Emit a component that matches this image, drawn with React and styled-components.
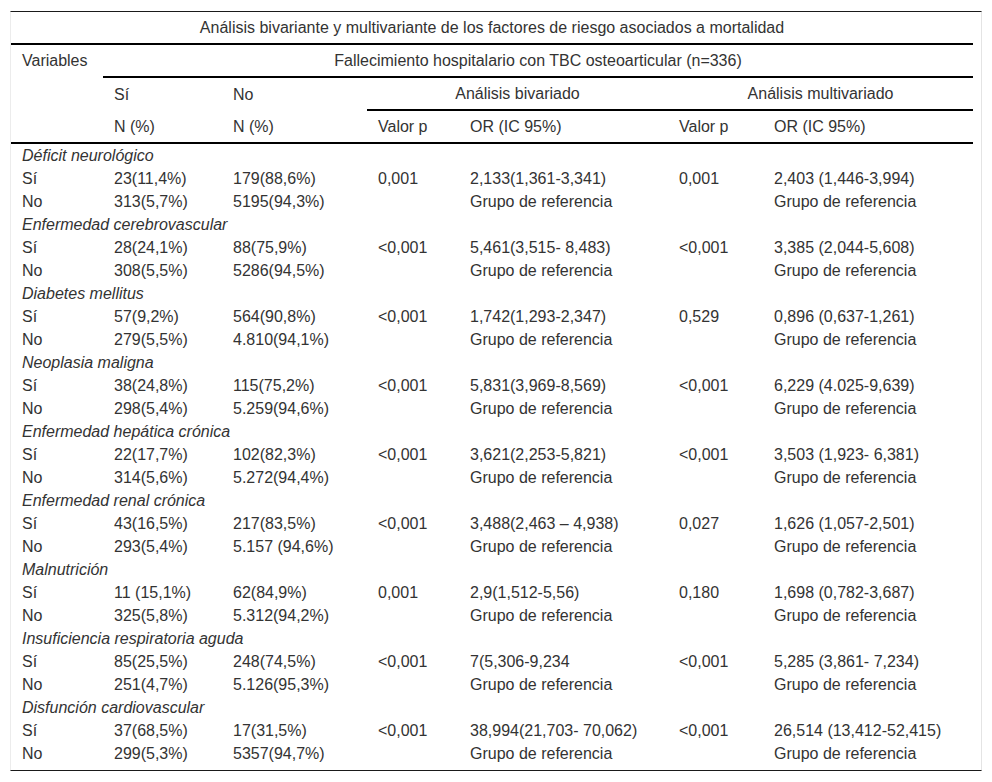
import React from "react";
import styled, { createGlobalStyle } from "styled-components";

const Global = createGlobalStyle`
  html, body { margin: 0; padding: 0; background: #fff; }
  body { font-family: "Liberation Sans", Arial, sans-serif; font-size: 16px; color: #333; }
`;

const font = `
  font-family: "Liberation Sans", Arial, sans-serif;
  font-size: 16px;
  line-height: 19px;
  color: #333;
`;

const Wrapper = styled.div`
  margin: 11px 0 0 10px;
  border-top: 1px solid #1a1a1a;
  border-bottom: 1px solid #1a1a1a;
  border-left: 1px solid #ececec;
  border-right: 1px solid #e4e4e4;
  padding: 0 8px 5px 0;
  box-sizing: content-box;
  width: 962px;
`;

const Table = styled.table`
  ${font}
  width: 962px;
  table-layout: fixed;
  border-collapse: separate;
  border-spacing: 0;
`;

const Th = styled.th`
  ${font}
  font-weight: normal;
  text-align: ${(p) => (p.$center ? "center" : "left")};
  vertical-align: ${(p) => (p.$top ? "top" : "middle")};
  padding: 6px 11px;
  height: 19px;
  white-space: nowrap;
  border-bottom: ${(p) => (p.$rule ? "2px solid #000" : "0")};
`;

const Td = styled.td`
  ${font}
  padding: 2px 11px;
  height: 19px;
  white-space: nowrap;
  vertical-align: middle;
  font-style: ${(p) => (p.$italic ? "italic" : "normal")};
`;

const widths = [92, 119, 145, 92, 209, 95, 210];

const groups = [
  ["Déficit neurológico",
    ["Sí", "23(11,4%)", "179(88,6%)", "0,001", "2,133(1,361-3,341)", "0,001", "2,403 (1,446-3,994)"],
    ["No", "313(5,7%)", "5195(94,3%)"]],
  ["Enfermedad cerebrovascular",
    ["Sí", "28(24,1%)", "88(75,9%)", "<0,001", "5,461(3,515- 8,483)", "<0,001", "3,385 (2,044-5,608)"],
    ["No", "308(5,5%)", "5286(94,5%)"]],
  ["Diabetes mellitus",
    ["Sí", "57(9,2%)", "564(90,8%)", "<0,001", "1,742(1,293-2,347)", "0,529", "0,896 (0,637-1,261)"],
    ["No", "279(5,5%)", "4.810(94,1%)"]],
  ["Neoplasia maligna",
    ["Sí", "38(24,8%)", "115(75,2%)", "<0,001", "5,831(3,969-8,569)", "<0,001", "6,229 (4.025-9,639)"],
    ["No", "298(5,4%)", "5.259(94,6%)"]],
  ["Enfermedad hepática crónica",
    ["Sí", "22(17,7%)", "102(82,3%)", "<0,001", "3,621(2,253-5,821)", "<0,001", "3,503 (1,923- 6,381)"],
    ["No", "314(5,6%)", "5.272(94,4%)"]],
  ["Enfermedad renal crónica",
    ["Sí", "43(16,5%)", "217(83,5%)", "<0,001", "3,488(2,463 – 4,938)", "0,027", "1,626 (1,057-2,501)"],
    ["No", "293(5,4%)", "5.157 (94,6%)"]],
  ["Malnutrición",
    ["Sí", "11 (15,1%)", "62(84,9%)", "0,001", "2,9(1,512-5,56)", "0,180", "1,698 (0,782-3,687)"],
    ["No", "325(5,8%)", "5.312(94,2%)"]],
  ["Insuficiencia respiratoria aguda",
    ["Sí", "85(25,5%)", "248(74,5%)", "<0,001", "7(5,306-9,234", "<0,001", "5,285 (3,861- 7,234)"],
    ["No", "251(4,7%)", "5.126(95,3%)"]],
  ["Disfunción cardiovascular",
    ["Sí", "37(68,5%)", "17(31,5%)", "<0,001", "38,994(21,703- 70,062)", "<0,001", "26,514 (13,412-52,415)"],
    ["No", "299(5,3%)", "5357(94,7%)"]],
];

function DataRow({ cells }) {
  const full = cells.length === 3
    ? [...cells, "", "Grupo de referencia", "", "Grupo de referencia"]
    : cells;
  return (
    <tr>
      {full.map((c, i) => (
        <Td key={i}>{c}</Td>
      ))}
    </tr>
  );
}

export default function App() {
  return (
    <>
      <Global />
      <Wrapper>
        <Table>
          <colgroup>
            {widths.map((w, i) => (
              <col key={i} style={{ width: w }} />
            ))}
          </colgroup>
          <thead>
            <tr>
              <Th colSpan={7} $center $rule>
                Análisis bivariante y multivariante de los factores de riesgo asociados a mortalidad
              </Th>
            </tr>
            <tr>
              <Th rowSpan={3} $top $rule>Variables</Th>
              <Th colSpan={6} $center $rule>
                Fallecimiento hospitalario con TBC osteoarticular (n=336)
              </Th>
            </tr>
            <tr>
              <Th>Sí</Th>
              <Th>No</Th>
              <Th colSpan={2} $center $rule>Análisis bivariado</Th>
              <Th colSpan={2} $center $rule>Análisis multivariado</Th>
            </tr>
            <tr>
              <Th $rule>N (%)</Th>
              <Th $rule>N (%)</Th>
              <Th $rule>Valor p</Th>
              <Th $rule>OR (IC 95%)</Th>
              <Th $rule>Valor p</Th>
              <Th $rule>OR (IC 95%)</Th>
            </tr>
          </thead>
          <tbody>
            {groups.map(([name, si, no]) => (
              <React.Fragment key={name}>
                <tr>
                  <Td colSpan={7} $italic>{name}</Td>
                </tr>
                <DataRow cells={si} />
                <DataRow cells={no} />
              </React.Fragment>
            ))}
          </tbody>
        </Table>
      </Wrapper>
    </>
  );
}
